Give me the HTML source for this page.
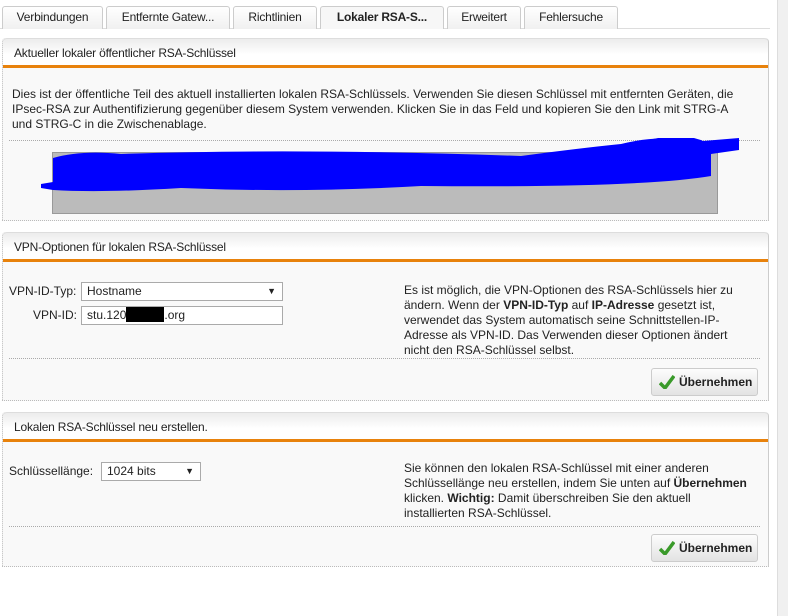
<!DOCTYPE html>
<html><head><meta charset="utf-8"><style>
*{box-sizing:border-box;margin:0;padding:0}
body{width:788px;height:616px;background:#fff;font-family:"Liberation Sans",Arial,sans-serif;font-size:12px;color:#222;position:relative;overflow:hidden}
.abs{position:absolute}
.tab{position:absolute;top:6px;height:23px;border:1px solid #ccc;border-bottom:none;border-radius:3px 3px 0 0;background:linear-gradient(#fff,#f0f0f0);text-align:center;line-height:21px;font-size:12px;color:#222;letter-spacing:-0.2px}
.tab.act{font-weight:bold;background:#f7f7f7}
.panel{position:absolute;left:2px;width:767px;border:1px dotted #bbb;border-right:1px solid #ccc;border-top:0 none;border-radius:4px 4px 0 0;background:#f9f9f9}
.ph{height:30px;background:linear-gradient(#ececec,#fff 60%);border-top:1px solid #ddd;border-radius:4px 4px 0 0;border-bottom:3px solid #e8820c;line-height:28px;padding-left:11px;font-size:12px;color:#222;letter-spacing:-0.2px}
.dot{position:absolute;left:6px;right:8px;border-top:1px dotted #aaa}
.sel,.inp{position:absolute;height:19px;border:1px solid #aaa;background:#fff;padding-left:5px;line-height:17px;font-size:12px}
.sel:after{content:"▼";position:absolute;right:6px;top:0;font-size:9px}
.btn{position:absolute;right:10px;width:107px;height:28px;border:1px solid #ccc;border-radius:3px;background:linear-gradient(#fdfdfd,#e3e3e3);font-weight:bold;font-size:12px;line-height:26px;padding-left:27px}
.btn svg{position:absolute;left:7px;top:6px}
.txt{position:absolute;line-height:15px;font-size:12px;white-space:nowrap}
</style></head><body>
<div class="abs" style="left:0;top:28px;width:770px;border-top:1px solid #ddd"></div>
<div class="tab" style="left:2px;width:101px">Verbindungen</div>
<div class="tab" style="left:106px;width:124px">Entfernte Gatew...</div>
<div class="tab" style="left:233px;width:84px">Richtlinien</div>
<div class="tab act" style="left:320px;width:124px">Lokaler RSA-S...</div>
<div class="tab" style="left:447px;width:74px">Erweitert</div>
<div class="tab" style="left:524px;width:94px">Fehlersuche</div>
<div class="abs" style="left:777px;top:0;width:11px;height:616px;background:#f0f0f0;border-left:1px solid #ddd"></div>

<div class="panel" style="top:38px;height:183px">
<div class="ph">Aktueller lokaler öffentlicher RSA-Schlüssel</div>
<div class="txt" style="left:9px;top:49px">Dies ist der öffentliche Teil des aktuell installierten lokalen RSA-Schlüssels. Verwenden Sie diesen Schlüssel mit entfernten Geräten, die<br>IPsec-RSA zur Authentifizierung gegenüber diesem System verwenden. Klicken Sie in das Feld und kopieren Sie den Link mit STRG-A<br>und STRG-C in die Zwischenablage.</div>
<div class="dot" style="top:102px"></div>
<div class="abs" style="left:49px;top:114px;width:666px;height:62px;background:#bbb;border:1px solid #999"></div>
<svg class="abs" style="left:-2px;top:100px" width="767" height="70"><path d="M40 46 L52 44 L52 20 Q80 12 120 16 Q300 10 520 18 Q580 10 620 6 Q660 -4 690 4 L738 0 L738 12 L710 16 L710 38 Q640 50 420 48 Q300 55 180 50 Q100 55 52 52 L40 50 Z" fill="#0000ff"/><path d="M640 8 Q690 -6 712 14" stroke="#0000ff" stroke-width="8" fill="none"/></svg>
</div>

<div class="panel" style="top:232px;height:169px">
<div class="ph">VPN-Optionen für lokalen RSA-Schlüssel</div>
<div class="txt" style="left:6px;top:52px">VPN-ID-Typ:</div>
<div class="sel" style="left:78px;top:50px;width:202px">Hostname</div>
<div class="txt" style="left:30px;top:76px">VPN-ID:</div>
<div class="inp" style="left:78px;top:74px;width:202px">stu.120<span style="display:inline-block;width:38px;height:15px;background:#000;vertical-align:-3px"></span>.org</div>
<div class="txt" style="left:401px;top:51px">Es ist möglich, die VPN-Optionen des RSA-Schlüssels hier zu<br>ändern. Wenn der <b>VPN-ID-Typ</b> auf <b>IP-Adresse</b> gesetzt ist,<br>verwendet das System automatisch seine Schnittstellen-IP-<br>Adresse als VPN-ID. Das Verwenden dieser Optionen ändert<br>nicht den RSA-Schlüssel selbst.</div>
<div class="dot" style="top:126px"></div>
<div class="btn" style="top:136px"><svg width="16" height="14"><path d="M1 8 L6 13 L15 1" stroke="#3a9a2a" stroke-width="3.5" fill="none"/></svg>Übernehmen</div>
</div>

<div class="panel" style="top:412px;height:155px">
<div class="ph">Lokalen RSA-Schlüssel neu erstellen.</div>
<div class="txt" style="left:6px;top:52px">Schlüssellänge:</div>
<div class="sel" style="left:98px;top:50px;width:100px">1024 bits</div>
<div class="txt" style="left:401px;top:49px">Sie können den lokalen RSA-Schlüssel mit einer anderen<br>Schlüssellänge neu erstellen, indem Sie unten auf <b>Übernehmen</b><br>klicken. <b>Wichtig:</b> Damit überschreiben Sie den aktuell<br>installierten RSA-Schlüssel.</div>
<div class="dot" style="top:114px"></div>
<div class="btn" style="top:122px"><svg width="16" height="14"><path d="M1 8 L6 13 L15 1" stroke="#3a9a2a" stroke-width="3.5" fill="none"/></svg>Übernehmen</div>
</div>
</body></html>
